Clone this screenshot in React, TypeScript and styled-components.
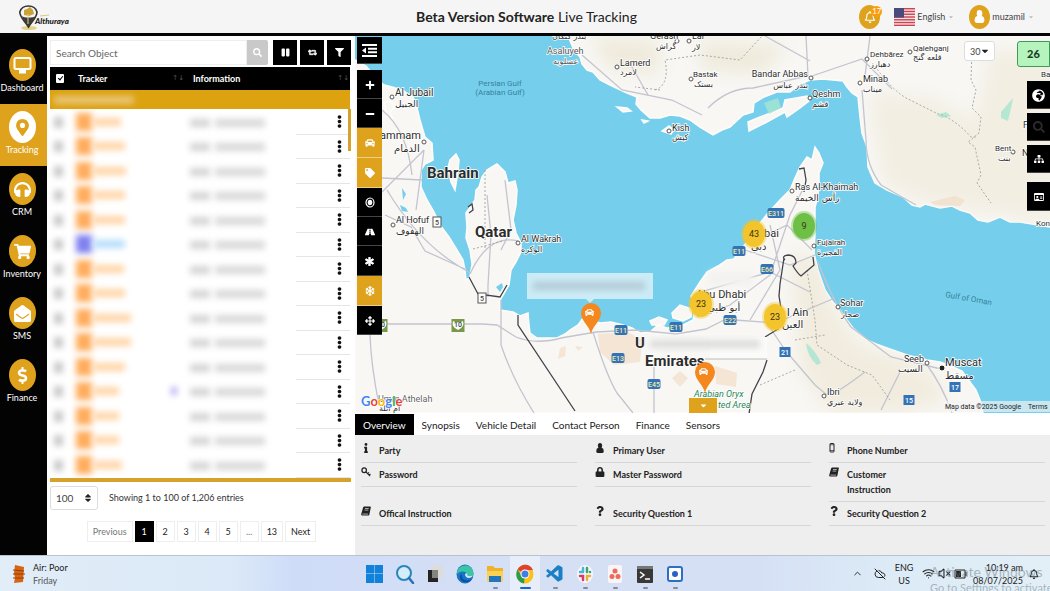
import React from "react";
import styled, { createGlobalStyle, css } from "styled-components";
import {
  FaAsterisk, FaArrowsAlt, FaCar, FaDollarSign, FaEllipsisV, FaEnvelopeOpen,
  FaFilter, FaGlobeAfrica, FaHeadphones, FaInfo, FaLock, FaMapMarkerAlt, FaMinus, FaPause,
  FaPlus, FaQuestion, FaRegBell, FaRegIdCard, FaRetweet, FaRoad, FaSearch, FaShoppingCart, FaSitemap,
  FaSnowflake, FaSort, FaTag, FaUser, FaCaretDown,
} from "react-icons/fa";
import { LuChevronUp, LuCloudOff, LuVolumeX, LuWifi } from "react-icons/lu";
import { VscVscode } from "react-icons/vsc";

const ui = 'Lato, "Open Sans", sans-serif';
const gold = "#dfa21c";

const Global = createGlobalStyle`
  * { box-sizing: border-box; }
  body { margin: 0; background: #fff; font-family: ${ui}; font-size: 9px; color: #222; }
  button, input, select { font-family: inherit; margin: 0; }
  button { border: 0; padding: 0; cursor: pointer; }
`;

const Page = styled.div`
  min-height: 100vh;
  display: flex;
  flex-direction: column;
  overflow: hidden;
`;

/* ---------- header ---------- */
const Header = styled.header`
  height: 36px;
  display: grid;
  grid-template-columns: 1fr auto 1fr;
  align-items: center;
  padding: 0 16px 0 19px;
  background: #f5f5f5;
  border-bottom: 3px solid #050505;
`;
const Title = styled.h1`
  margin: 0;
  font-size: 14px;
  font-weight: 400;
  color: #222;
  b { font-weight: 700; }
`;
const HeaderTools = styled.div`
  display: flex;
  justify-content: flex-end;
  align-items: center;
`;
const RoundButton = styled.button`
  position: relative;
  display: grid;
  place-items: center;
  width: 21px;
  height: 24px;
  border-radius: 50%;
  background: ${gold};
  color: #fff;
  font-size: 12px;
`;
const Count = styled.span`
  position: absolute;
  top: 1px;
  right: -2px;
  width: 11px;
  height: 11px;
  border-radius: 50%;
  background: #fb9d0b;
  font-size: 8px;
  line-height: 11px;
`;
const MenuButton = styled.button<{ $gap?: number }>`
  display: flex;
  align-items: center;
  gap: 2px;
  background: none;
  color: #444;
  font-size: 9px;
  margin-left: ${(p) => p.$gap ?? 0}px;
  svg.caret { font-size: 6px; color: #bbb; margin-left: 1px; }
`;

/* ---------- body ---------- */
const Body = styled.div`
  flex: 1;
  display: flex;
  min-height: 519px;
`;
const Nav = styled.nav`
  width: 47px;
  flex: none;
  padding-top: 6px;
  background: #030303;
`;
const NavLink = styled.a<{ $active?: boolean }>`
  display: flex;
  flex-direction: column;
  align-items: center;
  height: 62px;
  padding: 7px 3px 0 0;
  color: #fff;
  text-decoration: none;
  font-size: 9px;
  line-height: 14px;
  background: ${(p) => (p.$active ? gold : "transparent")};
`;
const NavDisc = styled.span<{ $active?: boolean }>`
  display: grid;
  place-items: center;
  width: 27px;
  height: 32px;
  border-radius: 50%;
  font-size: 17px;
  background: ${(p) => (p.$active ? "#fff" : gold)};
  color: ${(p) => (p.$active ? gold : "#fff")};
`;
const ListPanel = styled.section`
  width: 308px;
  flex: none;
  padding: 4px 4px 0 3px;
  background: #fff;
`;
const SearchRow = styled.form`
  display: flex;
  height: 25px;
  gap: 3px;
  margin-bottom: 2px;
`;
const SearchBox = styled.div`
  display: flex;
  flex: 1;
  margin-right: 2px;
`;
const SearchInput = styled.input`
  flex: 1;
  min-width: 0;
  border: 1px solid #eee;
  padding: 0 5px;
  font-size: 10px;
  outline: 0;
  &::placeholder { color: #666; opacity: 1; }
`;
const SearchButton = styled.button`
  width: 21px;
  background: #c9c9c9;
  color: #fff;
  border-radius: 0 2px 2px 0;
  display: grid;
  place-items: center;
  font-size: 9px;
`;
const ToolButton = styled.button`
  width: 24px;
  display: grid;
  place-items: center;
  background: #000;
  color: #fff;
  font-size: 9px;
`;
const TableWrap = styled.div`
  position: relative;
  padding-right: 1px;
  border-bottom: 4px solid #d7a22c;
`;
const ScrollThumb = styled.span`
  position: absolute;
  right: 0;
  top: 42px;
  width: 3px;
  height: 42px;
  background: #d7a22c;
`;
const TrackerTable = styled.table`
  width: 100%;
  border-collapse: collapse;
  table-layout: fixed;
  td, th { padding: 0; }
`;
const HeadRow = styled.tr`
  height: 23px;
  background: #000;
  color: #fff;
  font-size: 9px;
  text-align: left;
`;
const HeadCell = styled.th<{ $w: number; $pad?: number }>`
  width: ${(p) => p.$w}px;
  & > div { display: flex; align-items: center; justify-content: space-between; padding: 0 1px 0 ${(p) => p.$pad ?? 0}px; }
`;
const SortMark = styled.span`
  color: #555;
  font: 400 7px/9px "DejaVu Sans", sans-serif;
`;
const Tick = styled.input`
  appearance: none;
  display: block;
  width: 8px;
  height: 9px;
  margin: 0 0 0 6px;
  border-radius: 1px;
  background: #fff;
  position: relative;
  &:checked::after {
    content: "";
    position: absolute;
    left: 3px;
    top: 1px;
    width: 2px;
    height: 4px;
    border: solid #000;
    border-width: 0 1px 1px 0;
    transform: rotate(40deg);
  }
`;
const GroupRow = styled.tr`
  height: 19px;
  background: #dca20f;
`;
const GroupBlur = styled.span`
  display: block;
  width: 80px;
  height: 8px;
  margin-left: 4px;
  background: #e9c67a;
  filter: blur(3px);
`;
const Row = styled.tr`
  height: 25px;
  &:nth-child(even) { height: 24px; }
`;
const Smudge = styled.span<{ $w: number; $h: number; $c: string; $ml?: number }>`
  display: inline-block;
  vertical-align: middle;
  width: ${(p) => p.$w}px;
  height: ${(p) => p.$h}px;
  margin-left: ${(p) => p.$ml ?? 0}px;
  background: ${(p) => p.$c};
  filter: blur(3px);
`;
const MenuCell = styled.td`
  border-bottom: 1px solid #e6e6e6;
  text-align: right;
`;
const DotsButton = styled.button`
  display: inline-grid;
  place-items: center;
  width: 20px;
  height: 20px;
  margin-right: 1px;
  background: none;
  color: #111;
  font-size: 13px;
  vertical-align: middle;
`;
const EntriesRow = styled.div`
  display: flex;
  align-items: center;
  gap: 11px;
  margin-top: 4px;
  color: #333;
  font-size: 9px;
`;
const SelectShell = styled.label<{ $w: number; $h: number; $size: number }>`
  position: relative;
  display: block;
  width: ${(p) => p.$w}px;
  height: ${(p) => p.$h}px;
  color: #222;
  select {
    appearance: none;
    width: 100%;
    height: 100%;
    padding: 0 5px;
    border: 1px solid #ddd;
    border-radius: 3px;
    background: #fff;
    color: #444;
    font-size: ${(p) => p.$size}px;
  }
  svg { position: absolute; right: 5px; top: 50%; transform: translateY(-50%); font-size: 10px; pointer-events: none; }
`;
const Pager = styled.nav`
  display: flex;
  justify-content: center;
  gap: 2px;
  margin: 11px 0 0 2px;
`;
const PageButton = styled.button<{ $on?: boolean; $muted?: boolean }>`
  min-width: 19px;
  height: 21px;
  padding: 0 5px;
  border: 1px solid ${(p) => (p.$on ? "#000" : "#eee")};
  background: ${(p) => (p.$on ? "#000" : "#fff")};
  color: ${(p) => (p.$on ? "#fff" : p.$muted ? "#777" : "#222")};
  font-size: 9px;
`;

/* ---------- map ---------- */
const MainColumn = styled.main`
  flex: 1;
  min-width: 0;
  display: flex;
  flex-direction: column;
`;
const MapArea = styled.section`
  position: relative;
  flex: 1;
  min-height: 377px;
  overflow: hidden;
  background: #75cfec;
`;
const MapSvg = styled.svg`
  position: absolute;
  inset: 0;
  width: 100%;
  height: 100%;
`;
const Stack = styled.div<{ $side: "left" | "right"; $top: number }>`
  position: absolute;
  top: ${(p) => p.$top}px;
  ${(p) => (p.$side === "left" ? css`left: 2px; width: 25px;` : css`right: 0; width: 23px;`)}
  display: flex;
  flex-direction: column;
`;
const MapButton = styled.button<{ $gold?: boolean; $gap?: number; $h?: number; $dim?: boolean; $size?: number }>`
  display: grid;
  place-items: center;
  height: ${(p) => p.$h ?? 29}px;
  margin-bottom: ${(p) => p.$gap ?? 0}px;
  background: ${(p) => (p.$gold ? gold : "#000")};
  color: ${(p) => (p.$dim ? "#2a2a2a" : "#fff")};
  box-shadow: inset 0 -1px 0 ${(p) => (p.$gold ? "#ecd08c" : "#444")};
  font-size: ${(p) => p.$size ?? 10}px;
`;
const MapTop = styled.div`
  position: absolute;
  top: 5px;
  right: 0;
  display: flex;
  align-items: flex-start;
  gap: 22px;
`;
const Total = styled.output`
  width: 33px;
  height: 26px;
  border: 1px solid #3f9a5a;
  border-radius: 3px 0 0 3px;
  background: #b5f5bd;
  color: #1c3d23;
  font-size: 11px;
  font-weight: 900;
  line-height: 24px;
  text-align: center;
`;
const Drawer = styled.button`
  position: absolute;
  left: 334px;
  bottom: 0;
  width: 28px;
  height: 15px;
  display: grid;
  place-items: center;
  background: ${gold};
  color: #fff;
  font-size: 9px;
`;

/* ---------- detail tabs ---------- */
const Tabs = styled.div`
  display: flex;
  height: 22px;
  padding-top: 1px;
  background: #fff;
`;
const Tab = styled.button<{ $on?: boolean }>`
  padding: 0 8px;
  background: ${(p) => (p.$on ? "#000" : "transparent")};
  color: ${(p) => (p.$on ? "#fff" : "#222")};
  font-size: 10px;
`;
const Details = styled.dl`
  margin: 0;
  min-height: 120px;
  padding: 4px 5px 0 6px;
  display: grid;
  grid-template-columns: repeat(3, 1fr);
  column-gap: 18px;
  align-content: start;
  align-items: start;
  background: #eee;
`;
const Field = styled.div`
  display: flex;
  gap: 8px;
  padding: 4px 0;
  border-bottom: 1px solid #d6d6d6;
  font-size: 9px;
  line-height: 15px;
  svg { width: 10px; height: 10px; flex: none; color: #222; }
  dt { width: 80px; font-weight: 700; color: #222; }
  dd { margin: 0; flex: 1; }
`;

/* ---------- taskbar ---------- */
const Taskbar = styled.footer`
  position: relative;
  height: 36px;
  display: grid;
  grid-template-columns: 1fr auto 1fr;
  padding: 0 11px;
  border-top: 1px solid #b9c3cf;
  background: linear-gradient(90deg, #e1edf7 0, #dbe9f8 22%, #cfdcf8 28%, #d6e0f5 50%, #d5e0f5 72%, #dcebf6 85%, #e2eff7 100%);
  overflow: hidden;
`;
const Weather = styled.div`
  display: flex;
  align-items: center;
  gap: 6px;
  font-size: 9px;
  line-height: 13px;
  color: #222;
  small { display: block; font-size: 9px; color: #555; }
`;
const Apps = styled.div`
  display: flex;
`;
const AppButton = styled.button<{ $open?: boolean; $on?: boolean }>`
  width: 30px;
  display: flex;
  flex-direction: column;
  align-items: center;
  padding-top: 8px;
  gap: 3px;
  background: ${(p) => (p.$on ? "rgba(255,255,255,.45)" : "none")};
  &::after {
    content: "";
    width: ${(p) => (p.$on ? 11 : 5)}px;
    height: 2px;
    border-radius: 1px;
    background: ${(p) => (p.$on ? "#1569c4" : p.$open ? "#858c99" : "transparent")};
  }
`;
const Tray = styled.div`
  display: flex;
  justify-content: flex-end;
  align-items: center;
  gap: 3px;
  font-size: 9px;
  line-height: 13px;
  color: #222;
`;
const TrayArrow = styled(LuChevronUp)`
  margin-right: 8px;
`;
const Lang = styled.span`
  width: 20px;
  margin: 0 5px;
  text-align: center;
`;
const Clock = styled.time`
  margin: 0 3px 0 3px;
  text-align: right;
`;
const Watermark = styled.div`
  position: absolute;
  left: calc(100% - 120px);
  top: 6px;
  width: 160px;
  color: rgba(110, 120, 130, 0.5);
  font-size: 14px;
  line-height: 20px;
  pointer-events: none;
  small { display: block; font-size: 11px; line-height: 12px; white-space: nowrap; }
`;

const Logo = () => (
  <svg width="54" height="28" viewBox="0 0 54 28" role="img" aria-label="Althuraya">
    <ellipse cx="10" cy="25" rx="8" ry="2" fill="#e4d28a" />
    <path d="M9.500 24C6 18 .8 14.500.8 9A8.900 8 0 0 1 18 9c0 5.500-5 9-8.500 15z" fill="#f5f5f5" stroke="#333" strokeWidth="1.600" />
    <path d="M3 13c2 2 11 2 14 0-1 4-5 7-7.500 10.500C7 20 4 17 3 13z" fill="#3c3c38" />
    <path d="M5 7l3-1 3-2 3 3 1 4-5 2-5-1z" fill="#c9a337" />
    <path d="M9 11v10" stroke="#e4d28a" />
    <path d="M21 13l9-1" stroke="#dcca7a" />
    <text x="16" y="21" fontFamily="Lato" fontSize="8" fontStyle="italic" fontWeight="900" fill="#222">Althuraya</text>
  </svg>
);

const Flag = () => (
  <svg width="21" height="18" viewBox="0 0 21 18" aria-hidden="true">
    <rect width="21" height="18" fill="#f3e4e6" />
    {[0, 1, 2, 3, 4, 5, 6].map((i) => <rect key={i} y={i * 2.77} width="21" height="1.400" fill="#cf4350" />)}
    <rect width="10" height="9.600" fill="#4b4a7c" />
  </svg>
);

const MonitorIcon = () => (
  <svg width="19" height="19" viewBox="0 0 19 19" fill="none" stroke="#fff" strokeWidth="2">
    <rect x="1.500" y="2" width="16" height="11" rx="1.500" />
    <path d="M7 14h5v2.500H7z" fill="#fff" />
  </svg>
);

const PersonIcon = ({ size = 10 }: { size?: number }) => (
  <svg width={size} height={size} viewBox="0 0 12 12" fill="currentColor" aria-hidden="true">
    <ellipse cx="6" cy="3.200" rx="2.600" ry="3.200" />
    <path d="M1.500 9.500Q1.500 6 4 5.600h4q2.500.4 2.500 3.900Q10.500 12 9 12H3q-1.500 0-1.500-2.500z" />
  </svg>
);
const KeyIcon = () => (
  <svg viewBox="0 0 12 12" fill="none" stroke="currentColor" strokeWidth="1.500" aria-hidden="true">
    <ellipse cx="3.800" cy="3.800" rx="2.700" ry="2.900" />
    <path d="M5.800 5.800L11 11M8 8l1.500-1.500M9.800 9.800L11.300 8.300" />
  </svg>
);
const BookIcon = () => (
  <svg viewBox="0 0 12 12" fill="currentColor" aria-hidden="true">
    <path d="M4 .5h7.200q.8 0 .6.900L10 10.500q-.2.900-1 .9H1.600Q0 11.300.2 9.800L2.600 1.600Q3 .5 4 .5z" />
    <path d="M4.800 3h4.500M4.300 4.900h4.500M1.700 9.700h6.800" stroke="#eee" strokeWidth=".8" />
  </svg>
);
const PhoneIcon = () => (
  <svg viewBox="0 0 10 10" fill="none" stroke="currentColor" aria-hidden="true">
    <rect x="1" y=".5" width="4" height="8.500" rx=".6" />
    <path d="M1 7.500h4M1 1.800h4" strokeWidth=".7" />
  </svg>
);
const OutdentIcon = () => (
  <svg width="15" height="15" viewBox="0 0 15 15" fill="#fff" aria-hidden="true">
    <path d="M0 1h15v2H0zM6 4.700h9v2H6zM6 8.300h9v2H6zM0 12h15v2H0zM0 7.500l4-3v6z" />
  </svg>
);
const TargetIcon = () => (
  <svg width="10" height="11" viewBox="0 0 10 11" aria-hidden="true">
    <ellipse cx="5" cy="5.500" rx="4" ry="4.500" fill="none" stroke="#fff" strokeWidth="1.200" />
    <ellipse cx="5" cy="5.500" rx="2.300" ry="2.700" fill="#fff" />
  </svg>
);

const navItems = [
  { label: "Dashboard", icon: <MonitorIcon /> },
  { label: "Tracking", icon: <FaMapMarkerAlt />, active: true },
  { label: "CRM", icon: <FaHeadphones /> },
  { label: "Inventory", icon: <FaShoppingCart /> },
  { label: "SMS", icon: <FaEnvelopeOpen /> },
  { label: "Finance", icon: <FaDollarSign /> },
];

const rowWidths = [28, 32, 33, 32, 32, 32, 31, 32, 38, 38, 32, 26, 26, 26, 29];

const southCoast =
  "M355 60L366 66 378 80 384 85 392 87 402 90 413 97 416 104 418 112 420 120 422 127 425 137 432 143 433 160 425 164 421 170 421 187 427 200 434 212 440 225 449 237 457 250 463 260 465 270 466 280 470 277 472 264 470 250 466 238 467 227 466 213 471 206 475 200 476 190 479 187 482 177 487 170 492 167 497 164 505 172 508 183 515 181 517 190 516 205 513 220 516 233 521 243 521 252 516 262 511 270 509 285 500 300 500 310 513 312 520 316 528 313 529 325 530 333 537 338 557 338 565 334 570 330 578 325 583 318 590 320 600 323 611 322 623 325 632 328 640 333 650 332 658 325 667 328 676 327 683 325 693 320 695 306 691 296 700 282 707 272 718 266 727 260 734 259 739 251 743 247 752 235 760 223 769 212 780 200 790 190 795 178 800 167 807 157 812 160 815 147 819 153 823 163 819 173 819 188 817 200 815 207 815 233 814 253 818 270 825 290 832 301 840 310 847 320 853 328 860 334 867 340 876 344 887 348 907 355 927 360 940 362 953 367 962 371 970 382 976 390 980 400 983 413 355 413Z";
const northCoast =
  "M568 36L574 50 580 57 582 64 587 70 593 72 600 80 612 86 627 93 637 97 636 104 641 110 650 118 660 118 670 115 680 116 690 120 700 127 713 135 722 130 730 127 743 115 753 112 754 103 764 97 777 92 790 92 800 84 810 80 822 79 833 80 843 81 847 87 852 93 858 97 860 117 862 133 867 147 868 167 875 183 887 190 903 197 912 205 920 207 925 204 940 208 952 206 960 210 970 213 978 220 988 222 1000 217 1010 222 1020 222 1050 227 1300 240 1300 36Z";

interface LabelSpec {
  x: number; y: number; t: string; s?: number; w?: number; a?: "start" | "middle" | "end"; c?: string; ar?: boolean; rot?: number; it?: boolean;
}
const labels: LabelSpec[] = [
  { x: 427, y: 178, t: "Bahrain", s: 15, w: 700 },
  { x: 475, y: 237, t: "Qatar", s: 15, w: 700 },
  { x: 635, y: 348, t: "U", s: 15, w: 700 },
  { x: 645, y: 366, t: "Emirates", s: 15, w: 700 },
  { x: 395, y: 96, t: "Al Jubail" }, { x: 395, y: 107, t: "الجبيل", ar: true, s: 9 },
  { x: 380, y: 139, t: "ammam", s: 11 }, { x: 394, y: 152, t: "الدمام", ar: true },
  { x: 396, y: 223, t: "Al Hofuf", s: 9 }, { x: 396, y: 234, t: "الهفوف", ar: true, s: 9 },
  { x: 521, y: 242, t: "Al Wakrah", s: 9 }, { x: 521, y: 252, t: "الوكره", ar: true, s: 8 },
  { x: 378, y: 402, t: "Umm Athelah", s: 9, c: "#666" }, { x: 379, y: 411, t: "أم اثلة", ar: true, s: 8 },
  { x: 500, y: 86, t: "Persian Gulf", a: "middle", s: 8, c: "#35829d" },
  { x: 500, y: 95, t: "(Arabian Gulf)", a: "middle", s: 8, c: "#35829d" },
  { x: 547, y: 54, t: "Asaluyeh", s: 9, c: "#555" }, { x: 553, y: 64, t: "عسلويه", ar: true, s: 8, c: "#555" },
  { x: 620, y: 66, t: "Lamerd", s: 9 }, { x: 620, y: 75, t: "لامرد", ar: true, s: 8 },
  { x: 650, y: 39, t: "Gerash", s: 9 }, { x: 656, y: 49, t: "گراش", ar: true, s: 8 },
  { x: 692, y: 39, t: "Lar", s: 9 }, { x: 692, y: 50, t: "لار", ar: true, s: 8 },
  { x: 552, y: 39, t: "بندر كنگان", ar: true, s: 8 },
  { x: 693, y: 77, t: "Bastak", s: 8 }, { x: 694, y: 87, t: "بستک", ar: true, s: 8 },
  { x: 672, y: 131, t: "Kish", s: 9 }, { x: 672, y: 140, t: "كيش", ar: true, s: 8 },
  { x: 808, y: 77, t: "Bandar Abbas", a: "end", s: 9 }, { x: 808, y: 88, t: "بندر عباس", ar: true, a: "end", s: 8 },
  { x: 812, y: 97, t: "Qeshm", s: 9 }, { x: 812, y: 107, t: "قشم", ar: true, s: 8 },
  { x: 863, y: 82, t: "Minab", s: 9 }, { x: 863, y: 92, t: "ميناب", ar: true, s: 8 },
  { x: 870, y: 57, t: "Dehbārez", s: 8 }, { x: 870, y: 67, t: "دهبارز", ar: true, s: 8 },
  { x: 913, y: 51, t: "Qalehganj", s: 8 }, { x: 913, y: 60, t: "قلعه گنج", ar: true, s: 8 },
  { x: 795, y: 190, t: "Ras Al-Khaimah" , s: 9 }, { x: 795, y: 201, t: "رأس الخيمة", ar: true, s: 9 },
  { x: 817, y: 245, t: "Fujairah", s: 8 }, { x: 817, y: 255, t: "الفجيرة", ar: true, s: 8 },
  { x: 764, y: 237, t: "bai", s: 11 }, { x: 751, y: 250, t: "دبي", ar: true },
  { x: 696, y: 298, t: "Abu Dhabi", s: 11 }, { x: 707, y: 311, t: "أبو ظبي", ar: true },
  { x: 787, y: 316, t: "l Ain", s: 11 }, { x: 782, y: 328, t: "العين", ar: true },
  { x: 840, y: 306, t: "Sohar", s: 9 }, { x: 841, y: 317, t: "صحار", ar: true, s: 8 },
  { x: 904, y: 362, t: "Seeb", s: 9 }, { x: 898, y: 372, t: "السيب", ar: true, s: 9 },
  { x: 945, y: 366, t: "Muscat", s: 11 }, { x: 945, y: 379, t: "مسقط", ar: true, s: 10 },
  { x: 827, y: 395, t: "Ibri", s: 9 }, { x: 827, y: 405, t: "ولاية عبري", ar: true, s: 8 },
  { x: 995, y: 151, t: "Bent", s: 8 }, { x: 998, y: 161, t: "بنت", ar: true, s: 8 },
  { x: 1041, y: 77, t: "Ba", s: 8 }, { x: 1036, y: 226, t: "Kon", s: 8 },
  { x: 1023, y: 128, t: "F", s: 9 }, { x: 1022, y: 156, t: "N", s: 9 },
  { x: 945, y: 297, t: "Gulf of Oman", s: 8, c: "#35829d", rot: 10 },
  { x: 694, y: 397, t: "Arabian Oryx", s: 9, c: "#26875a", it: true },
  { x: 718, y: 408, t: "ted Area", s: 9, c: "#26875a", it: true },
];
const towns = [[392, 97], [424, 142], [393, 225], [518, 243], [617, 67], [677, 41], [689, 41], [691, 79], [669, 131], [811, 78], [810, 98], [860, 83], [867, 59], [910, 52], [792, 191], [814, 246], [838, 307], [927, 363], [824, 396], [1013, 152]];
const shields: { x: number; y: number; t: string; k?: "n" | "g" | "s" }[] = [
  { x: 621, y: 330, t: "E11" }, { x: 676, y: 327, t: "E11" }, { x: 739, y: 251, t: "E11" }, { x: 618, y: 358, t: "E13" },
  { x: 654, y: 384, t: "E45" }, { x: 776, y: 213, t: "E311" }, { x: 767, y: 269, t: "E66" }, { x: 730, y: 320, t: "E22" },
  { x: 785, y: 352, t: "21", k: "n" }, { x: 909, y: 400, t: "15", k: "n" }, { x: 955, y: 387, t: "17", k: "n" },
  { x: 437, y: 222, t: "5", k: "s" }, { x: 482, y: 298, t: "5", k: "s" },
  { x: 458, y: 324, t: "10", k: "g" }, { x: 381, y: 324, t: "10", k: "g" },
];
const clusters = [
  { x: 754, y: 234, n: 43, c: "#f3c42b" }, { x: 804, y: 226, n: 9, c: "#6dbf45" },
  { x: 701, y: 304, n: 23, c: "#f3c42b" }, { x: 775, y: 317, n: 23, c: "#f3c42b" },
];

const Pin = ({ x, y }: { x: number; y: number }) => (
  <g transform={`translate(${x} ${y})`}>
    <path d="M0 15C-2 6-10 2-10-6A10 10 0 0 1 10-6C10 2 2 6 0 15z" fill="#f5871f" />
    <FaCar x={-6} y={-11} width={12} height={11} color="#fff" />
  </g>
);

const MapDrawing = () => (
  <MapSvg viewBox="355 36 695 377" preserveAspectRatio="xMinYMin slice" role="img" aria-label="Map of the Persian Gulf">
    <defs>
      <filter id="soft" x="-20%" y="-60%" width="140%" height="220%"><feGaussianBlur stdDeviation="3" /></filter>
      <filter id="patch" x="-60%" y="-60%" width="220%" height="220%"><feGaussianBlur stdDeviation="9" /></filter>
      <clipPath id="north"><path d={northCoast} /></clipPath>
      <clipPath id="south"><path d={southCoast} /></clipPath>
    </defs>
    <g fill="#f8f7f4" stroke="#fdfdfb" strokeWidth="1.500">
      <path d={southCoast} />
      <path d={northCoast} />
      <path d="M748 122L760 117 783 108 785 100 807 96 809 101 800 108 787 117 785 112 765 123 749 131z" />
      <path d="M450 160l6-6 3 6-1 12-3 18-4-8-3-14zM617 107l10 1 4 3-8 1zM642 120l6 1-4 2zM650 321l9-4 8 3-3 5-12 0zM672 313l8-8 12 4-1 8-8 4-10-3z" />
      <path d="M384 103l6-2 5 4-5 8 3 6-6-3zM662 131l7-5 5 4-3 4z" />
    </g>
    <g clipPath="url(#north)">
      <g filter="url(#patch)" fill="#f2eee2">
        <path d="M873 130L870 90 900 95 935 98 975 120 990 50 1060 50V225L1000 215 930 205 885 185z" />
        <path d="M590 36L660 40 660 75 610 70zM700 40L790 45 760 75 700 70z" fill="#efeadb" />
      </g>
    </g>
    <g clipPath="url(#south)">
      <g filter="url(#patch)" fill="#f1ecde">
        <path d="M790 255L818 255 835 310 860 345 925 365 950 400 900 413 830 413 800 370z" />
      </g>
    </g>
    <path d="M598 334l30-2 14 8-2 22-26 3-14-13zM672 378l8-7 8 7-8 9zM715 366l22 7-1 14-20-3zM560 348l6-2-1 10-7 3zM575 346l8 1-5 4z" fill="#f3dfcb" opacity=".75" />
    <path d="M930 202l25-6 10 4-5 6-25-1z" fill="#f1dfca" opacity=".8" />
    <path d="M806 343q10 8 15 20l-4 2q-10-9-11-22zM1001 112l12-14-2 10-3 13-7-3zM936 115l10-3 5 4-9 2zM764 103l14-5 3 10-12 6z" fill="#a5e5cf" opacity=".8" />
    <path d="M496 287l6-4 1 4-3 5zM400 205l6 3 2 4-6-1zM402 188l4 6-3 6z" fill="#75cfec" />
    <g fill="none" stroke="#c3c4cf" strokeWidth="1.300">
      <path d="M382 110q25 20 30 65M424 150L382 192M424 150l-8 60M382 178l40 2M387 190q30 50 70 75l13 8M385 215l26 12 14 24 40 18" />
      <path d="M382 324h100l15 1 19 12q20 8 45 1l35-6 40-2 40 4 30-5 20-10" />
      <path d="M470 274q18-40 48-33M487 195l4 40-3 50 0 12M505 180l6 50-10 20M501 300v45q12 35 33 68M593 332q14 45 24 61l16 20M654 360v60M370 335q1 30 9 70" />
      <path d="M697 317l33-12 40-30 20-60 15-30M700 292l70-20 40 20M735 320l40 3 60-25M745 250l45 15 25-10M757 240l30-15 25 25M770 225l10 45-30 50" />
      <path d="M818 262q15 40 33 65l40 30 50 12M785 350l30 35 12 10M785 350l-20-30M865 372q-20 15-35 24M927 365q15 20 25 48M901 370l-20 40" />
      <path d="M582 55l40 35 50 10 30 15M628 60l20 35M708 108q20-20 45-20l55-12-2-40M812 76l50-17 30 30M862 90l4 50q0 25 15 45l35 20M870 36l-5 40M765 36l45 25" />
    </g>
    <g fill="none" stroke="#a9a9a6" strokeWidth="1" strokeDasharray="2 2">
      <path d="M660 90l-25-3M655 90q15-5 10-30l35-5 40 5 22-24M875 66q15 22 31 32l30 15q18 5 35 24l5 0M972 50l-1 30 5 10-4 18 9 9-2 16-6 5-5 4 7 5 6 28-4 8 14 20" />
      <path d="M485 170v80M473 249l30-8M807 270l8 50 2 25 30 20 25 10 18 25M795 340l30-5M760 385l35-15" />
    </g>
    <g fill="none" stroke="#42424a" strokeWidth="1.300">
      <path d="M518 315v10L575 411M469 277l9 17 22 3 7-12M468 207l4-3 1 6-4 3" />
      <path d="M799 169l5-1 2 12-2 12M785 260q-4-4 3-5 8 0 8 8l-3 3q5 8 8 10l13-11-1-8M784 258l-4 26-1 12 4 25-5 8-13 8M767 360l-4 12-11 22-3 20" />
    </g>
    {shields.map((s, i) => {
      const w = s.t.length === 4 ? 17 : s.k === "s" ? 8 : s.k === "n" ? 11 : 13;
      const fill = s.k === "s" ? "#fff" : s.k === "g" ? "#78984a" : "#3472b8";
      return (
        <g key={i}>
          <rect x={s.x - w / 2} y={s.y - 5} width={w} height={s.k === "g" ? 13 : 10} rx={s.k ? 0 : 2} fill={fill} stroke={s.k === "s" ? "#555" : "none"} />
          {s.k === "g" && <path d={`M${s.x - 5} ${s.y - 3}q5 3 10 0 2 6-5 9-7-3-5-9z`} fill="#fff" />}
          <text x={s.x} y={s.y + 3} textAnchor="middle" fontFamily="Roboto" fontWeight="500" fontSize="7" fill={s.k === "s" || s.k === "g" ? "#444" : s.k ? "#fff" : "#f3ef9b"}>{s.t}</text>
        </g>
      );
    })}
    {towns.map(([x, y], i) => <circle key={i} cx={x} cy={y} r="2" fill="#fff" stroke="#555" />)}
    <circle cx="942" cy="368" r="3" fill="#222" stroke="#fff" />
    {labels.map((l, i) => (
      <text
        key={i}
        x={l.x}
        y={l.y}
        fontFamily={l.ar ? '"DejaVu Sans", sans-serif' : "Roboto, sans-serif"}
        fontSize={l.s ?? 10}
        fontWeight={l.w ?? 400}
        fontStyle={l.it ? "italic" : "normal"}
        textAnchor={l.a ?? "start"}
        fill={l.c ?? "#2c2c2c"}
        stroke={l.c === "#35829d" ? "none" : "#fff"}
        strokeWidth="1.500"
        paintOrder="stroke"
        transform={l.rot ? `rotate(${l.rot} ${l.x} ${l.y})` : undefined}
      >
        {l.t}
      </text>
    ))}
    <rect x="709" y="272" width="44" height="14" fill="#f3f2f0" filter="url(#soft)" />
    <g>
      <rect x="648" y="338" width="112" height="14" fill="#f9f9f8" filter="url(#soft)" />
      <path d="M710 337h57v22h-57z" fill="#fbfbfa" />
      <path d="M705 359h62" stroke="#bbb" />
      <rect x="650" y="340" width="110" height="8" fill="#dcdcdc" filter="url(#soft)" />
    </g>
    <g>
      <path d="M527 273h126v26h-59l-4 4-4-4h-59z" fill="#cbebf6" />
      <rect x="533" y="282" width="112" height="8" fill="#b2ccd5" filter="url(#soft)" />
    </g>
    {clusters.map((c, i) => (
      <g key={i}>
        <ellipse cx={c.x} cy={c.y} rx="13" ry="15" fill={c.c} opacity=".4" />
        <ellipse cx={c.x} cy={c.y} rx="11" ry="13" fill={c.c} />
        <text x={c.x} y={c.y + 3} textAnchor="middle" fontFamily="Roboto" fontSize="9" fill="#3c3311">{c.n}</text>
      </g>
    ))}
    <Pin x={591} y={319} />
    <Pin x={705} y={378} />
    <text x="361" y="406" fontFamily="Lato" fontSize="13" fontWeight="700" stroke="#fff" strokeWidth="1" paintOrder="stroke">
      <tspan fill="#4285f4">G</tspan><tspan fill="#ea4335">o</tspan><tspan fill="#fbbc05">o</tspan><tspan fill="#4285f4">g</tspan><tspan fill="#34a853">l</tspan><tspan fill="#ea4335">e</tspan>
    </text>
    <rect x="942" y="401" width="108" height="11" fill="#f5f5f5" opacity=".65" />
    <text x="945" y="409" fontFamily="Roboto" fontSize="7" fill="#222">Map data ©2025 Google</text>
    <text x="1028" y="409" fontFamily="Roboto" fontSize="7" fill="#222">Terms</text>
  </MapSvg>
);

/* ---------- taskbar icons ---------- */
const Icon = ({ children }: { children: React.ReactNode }) => (
  <svg width="20" height="20" viewBox="0 0 20 20" aria-hidden="true">{children}</svg>
);
const apps: { name: string; open?: boolean; on?: boolean; art: React.ReactNode }[] = [
  { name: "Start", art: <Icon><path d="M1 1h8.500v8.500H1zM10 1h8v8.500h-8zM1 10h8.500v9H1zM10 10h8v9h-8z" fill="#1182da" /></Icon> },
  { name: "Search", art: <Icon><circle cx="9" cy="9" r="7" fill="#d4edfa" stroke="#2a86b8" strokeWidth="2" /><path d="M14 14l4 5" stroke="#2a6fc0" strokeWidth="2.500" strokeLinecap="round" /></Icon> },
  { name: "Task view", art: <Icon><path d="M7 1h11v13H7z" fill="#dcdcd8" /><path d="M3 6h10v12H3z" fill="#242424" /><path d="M7 6h6v8H7z" fill="#85857f" /></Icon> },
  { name: "Edge", art: <Icon><ellipse cx="10" cy="10" rx="8.500" ry="9.500" fill="#1675c4" /><path d="M2 10C2-1 18-1 18.500 9c0 4-5 4-6.500 2 1-4-7-5-10-1z" fill="#3cc5a4" /><path d="M7 11c-1 5 5 7 10 4-3 5-12 4-12-2 0-2 1-3 2-2z" fill="#0d4f9e" /><path d="M10 10c2-2 3 0 2 1 2 2 5 1 6 0-1 4-8 4-8-1z" fill="#d6e8f7" /></Icon> },
  { name: "File Explorer", open: true, art: <Icon><path d="M2 2h6l2 2h8v14H2z" fill="#eeb22b" /><path d="M2 7h16v11H2z" fill="#fbd053" /><path d="M4 12h12v6H4z" fill="#2376bd" /></Icon> },
  { name: "Chrome", open: true, on: true, art: <Icon><ellipse cx="10" cy="10" rx="8.500" ry="9.500" fill="#fbc116" /><path d="M10 10L2.500 5.500C6-1 15-1 18 6h-8z" fill="#de4134" /><path d="M10 10l-1 9.500C1 18 0 10 2.500 5.500l4 6z" fill="#2c9c4c" /><circle cx="10" cy="10" r="4.500" fill="#fff" /><circle cx="10" cy="10" r="3.500" fill="#3f7de8" /></Icon> },
  { name: "Visual Studio Code", open: true, art: <VscVscode size={20} color="#1b7fc6" /> },
  { name: "Slack", open: true, art: <Icon><ellipse cx="10" cy="10" rx="8" ry="9" fill="#f6f6fa" /><path d="M8 4v4M5 8h3" stroke="#45b6d8" strokeWidth="2.500" strokeLinecap="round" /><path d="M12 4v4M15 8h0" stroke="#35a777" strokeWidth="2.500" strokeLinecap="round" /><path d="M5 12h3v4" stroke="#d93b66" strokeWidth="2.500" fill="none" strokeLinecap="round" /><path d="M12 16v-4h3" stroke="#e7b13c" strokeWidth="2.500" fill="none" strokeLinecap="round" /></Icon> },
  { name: "Asana", open: true, art: <Icon><rect x="3" y="1" width="14" height="18" rx="2" fill="#f9f5f4" /><circle cx="10" cy="7" r="2.500" fill="#ef6a5a" /><circle cx="7" cy="12.500" r="2.500" fill="#ef6a5a" /><circle cx="13" cy="12.500" r="2.500" fill="#ef6a5a" /></Icon> },
  { name: "Terminal", open: true, art: <Icon><rect x="2" y="2" width="16" height="17" rx="1" fill="#383838" /><path d="M2 2h16v3H2z" fill="#777" /><path d="M5 8l4 3-4 3M10 15h5" stroke="#fff" strokeWidth="1.500" fill="none" /></Icon> },
  { name: "Recorder", open: true, art: <Icon><rect x="3" y="3" width="14" height="14" rx="2" fill="#fff" stroke="#2c6fc7" strokeWidth="2" /><circle cx="10" cy="10" r="3" fill="#2c62c4" /></Icon> },
];

const fields: { label: string; icon: React.ReactNode }[] = [
  { label: "Party", icon: <FaInfo /> },
  { label: "Primary User", icon: <PersonIcon /> },
  { label: "Phone Number", icon: <PhoneIcon /> },
  { label: "Password", icon: <KeyIcon /> },
  { label: "Master Password", icon: <FaLock /> },
  { label: "Customer Instruction", icon: <BookIcon /> },
  { label: "Offical Instruction", icon: <BookIcon /> },
  { label: "Security Question 1", icon: <FaQuestion /> },
  { label: "Security Question 2", icon: <FaQuestion /> },
];

export default function App() {
  return (
    <Page>
      <Global />
      <Header>
        <Logo />
        <Title><b>Beta Version Software</b> Live Tracking</Title>
        <HeaderTools>
          <RoundButton aria-label="Notifications"><FaRegBell /><Count>17</Count></RoundButton>
          <MenuButton $gap={14}><Flag />English<FaCaretDown className="caret" /></MenuButton>
          <MenuButton $gap={15}>
            <RoundButton as="span"><PersonIcon size={13} /></RoundButton>muzamil<FaCaretDown className="caret" />
          </MenuButton>
        </HeaderTools>
      </Header>

      <Body>
        <Nav>
          {navItems.map((n) => (
            <NavLink key={n.label} href="#" $active={n.active}>
              <NavDisc $active={n.active}>{n.icon}</NavDisc>
              {n.label}
            </NavLink>
          ))}
        </Nav>

        <ListPanel>
          <SearchRow>
            <SearchBox>
              <SearchInput placeholder="Search Object" aria-label="Search Object" />
              <SearchButton type="button" aria-label="Search"><FaSearch /></SearchButton>
            </SearchBox>
            <ToolButton type="button" aria-label="Pause"><FaPause /></ToolButton>
            <ToolButton type="button" aria-label="Refresh"><FaRetweet stroke="#fff" strokeWidth={40} /></ToolButton>
            <ToolButton type="button" aria-label="Filter"><FaFilter /></ToolButton>
          </SearchRow>
          <TableWrap>
            <TrackerTable>
              <thead>
                <HeadRow>
                  <HeadCell $w={22}><Tick type="checkbox" defaultChecked aria-label="Select all" /></HeadCell>
                  <HeadCell $w={113} $pad={6}><div>Tracker<SortMark>↑↓</SortMark></div></HeadCell>
                  <HeadCell $w={111} $pad={8}><div>Information</div></HeadCell>
                  <HeadCell $w={54}><div><span /><SortMark>↑↓</SortMark></div></HeadCell>
                </HeadRow>
                <GroupRow><td colSpan={4}><GroupBlur /></td></GroupRow>
              </thead>
              <tbody>
                {rowWidths.map((w, i) => {
                  const blue = i === 5;
                  return (
                    <Row key={i}>
                      <td><Smudge $w={9} $h={11} $c="#c8c8c8" $ml={4} /></td>
                      <td>
                        <Smudge $w={16} $h={18} $c={blue ? "#8080f0" : "#ffad5c"} $ml={4} />
                        <Smudge $w={w} $h={8} $c={blue ? "#b5dcfa" : "#ffd4a6"} $ml={1} />
                        {i === 11 && <Smudge $w={6} $h={8} $c="#b9a9f0" $ml={52} />}
                      </td>
                      <td>
                        <Smudge $w={20} $h={8} $c="#d4d4d4" $ml={5} />
                        <Smudge $w={50} $h={8} $c="#d8d8d8" $ml={5} />
                      </td>
                      <MenuCell><DotsButton aria-label="Row menu"><FaEllipsisV /></DotsButton></MenuCell>
                    </Row>
                  );
                })}
              </tbody>
            </TrackerTable>
            <ScrollThumb />
          </TableWrap>
          <EntriesRow>
            <SelectShell $w={48} $h={24} $size={10}>
              <select aria-label="Entries per page"><option>100</option></select>
              <FaSort />
            </SelectShell>
            Showing 1 to 100 of 1,206 entries
          </EntriesRow>
          <Pager aria-label="Pages">
            <PageButton $muted>Previous</PageButton>
            <PageButton $on>1</PageButton>
            <PageButton>2</PageButton>
            <PageButton>3</PageButton>
            <PageButton>4</PageButton>
            <PageButton>5</PageButton>
            <PageButton $muted>...</PageButton>
            <PageButton>13</PageButton>
            <PageButton>Next</PageButton>
          </Pager>
        </ListPanel>

        <MainColumn>
          <MapArea>
            <MapDrawing />
            <Stack $side="left" $top={1}>
              <MapButton $h={27} $gap={6} aria-label="Collapse"><OutdentIcon /></MapButton>
              <MapButton aria-label="Zoom in"><FaPlus /></MapButton>
              <MapButton aria-label="Zoom out"><FaMinus /></MapButton>
              <MapButton $gold $h={30} aria-label="Vehicles"><FaCar /></MapButton>
              <MapButton $gold $h={30} aria-label="Labels"><FaTag /></MapButton>
              <MapButton aria-label="Points"><TargetIcon /></MapButton>
              <MapButton aria-label="Roads"><FaRoad /></MapButton>
              <MapButton $h={30} $size={9} aria-label="Landmarks"><FaAsterisk stroke="#fff" strokeWidth={50} /></MapButton>
              <MapButton $gold $h={30} aria-label="Clusters"><FaSnowflake /></MapButton>
              <MapButton aria-label="Move"><FaArrowsAlt /></MapButton>
            </Stack>
            <MapTop>
              <SelectShell $w={31} $h={20} $size={9}>
                <select aria-label="Refresh interval"><option>30</option></select>
                <FaCaretDown />
              </SelectShell>
              <Total>26</Total>
            </MapTop>
            <Stack $side="right" $top={45}>
              <MapButton $h={28} $gap={4} $size={13} aria-label="Globe"><FaGlobeAfrica /></MapButton>
              <MapButton $h={28} $gap={4} $size={12} $dim aria-label="Find"><FaSearch /></MapButton>
              <MapButton $h={28} $gap={9} aria-label="Hierarchy"><FaSitemap /></MapButton>
              <MapButton $h={29} aria-label="Card"><FaRegIdCard /></MapButton>
            </Stack>
            <Drawer aria-label="Toggle details"><FaCaretDown /></Drawer>
          </MapArea>

          <Tabs role="tablist">
            {["Overview", "Synopsis", "Vehicle Detail", "Contact Person", "Finance", "Sensors"].map((t, i) => (
              <Tab key={t} role="tab" aria-selected={i === 0} $on={i === 0}>{t}</Tab>
            ))}
          </Tabs>
          <Details>
            {fields.map((f) => (
              <Field key={f.label}>{f.icon}<dt>{f.label}</dt><dd /></Field>
            ))}
          </Details>
        </MainColumn>
      </Body>

      <Taskbar>
        <Weather>
          <svg width="16" height="20" viewBox="0 0 16 20" aria-hidden="true">
            <path d="M4 1l9 2-1 15-9 1 1-5-1-5z" fill="#d9640f" />
            <path d="M2 6l11 1M2 10h12M2 14l11 0" stroke="#8f3e08" />
          </svg>
          <span>Air: Poor<small>Friday</small></span>
        </Weather>
        <Apps>
          {apps.map((a) => <AppButton key={a.name} aria-label={a.name} $open={a.open} $on={a.on}>{a.art}</AppButton>)}
        </Apps>
        <Tray>
          <TrayArrow size={11} />
          <LuCloudOff size={12} />
          <Lang>ENG US</Lang>
          <LuWifi size={13} />
          <LuVolumeX size={13} />
          <svg width="13" height="10" viewBox="0 0 13 10" aria-hidden="true">
            <path d="M1 1h10v8H1zM12 3v4" fill="none" stroke="#222" /><path d="M2 2h5v6H2z" fill="#222" />
          </svg>
          <Clock>10:19 am<br />08/07/2025</Clock>
          <FaRegBell size={10} />
        </Tray>
        <Watermark>Activate Windows<small>Go to Settings to activate Windows.</small></Watermark>
      </Taskbar>
    </Page>
  );
}
